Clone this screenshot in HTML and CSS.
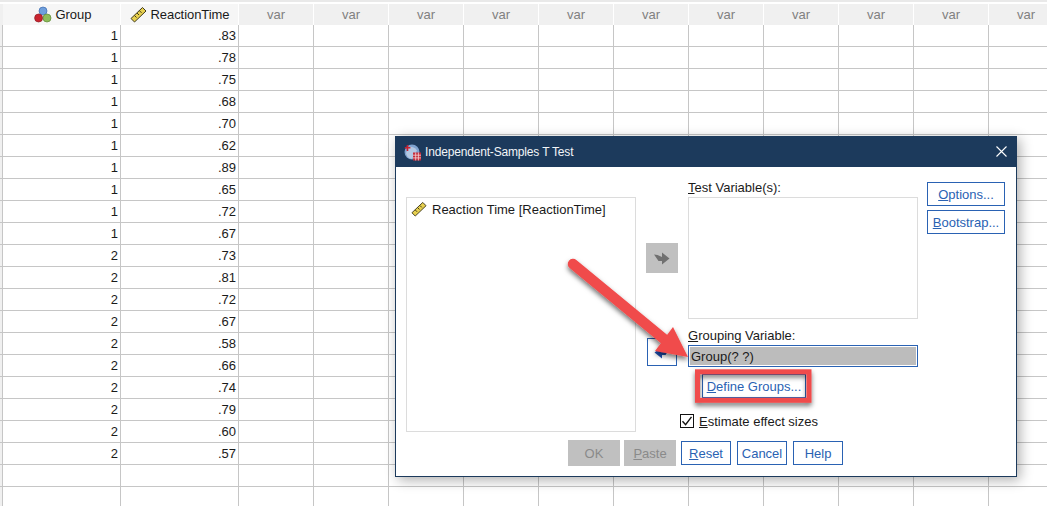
FILE: index.html
```html
<!DOCTYPE html>
<html lang="en">
<head>
<meta charset="utf-8">
<title>Independent-Samples T Test</title>
<link rel="stylesheet" href="styles.css">
</head>
<body>
<div class="sheet">
  <div class="head">
    <div class="gutter"></div>
    <div class="hcell data-col group-head">
      <svg class="ico" width="18" height="18" viewBox="0 0 18 18"><circle cx="9" cy="5" r="4" fill="#6f9fdc" stroke="#3d6bb0" stroke-width=".7"/><circle cx="4.600" cy="12" r="4" fill="#c9242f" stroke="#8e1a22" stroke-width=".7"/><circle cx="13" cy="12" r="4" fill="#8fbc5a" stroke="#5f8a38" stroke-width=".7"/></svg>
      <span>Group</span>
    </div>
    <div class="hcell data-col time-head">
      <svg class="ico" width="17" height="17" viewBox="0 0 17 17"><path d="M1 12.500 12.500 1.500 16 5 4.500 16Z" fill="#e6cf4e" stroke="#3f3a1c" stroke-width="1"/><path d="M4.500 9.500l2 2M7 7l2 2M9.500 4.800l2 2" stroke="#3f3a1c" stroke-width="1" fill="none"/></svg>
      <span>ReactionTime</span>
    </div>
    <div class="hcell var-col">var</div><div class="hcell var-col">var</div><div class="hcell var-col">var</div><div class="hcell var-col">var</div><div class="hcell var-col">var</div><div class="hcell var-col">var</div><div class="hcell var-col">var</div><div class="hcell var-col">var</div><div class="hcell var-col">var</div><div class="hcell var-col">var</div><div class="hcell var-col">var</div>
  </div>
  <div class="row"><div class="gutter"></div><div class="cell data-col">1</div><div class="cell data-col">.83</div><div class="rest"></div></div>
  <div class="row"><div class="gutter"></div><div class="cell data-col">1</div><div class="cell data-col">.78</div><div class="rest"></div></div>
  <div class="row"><div class="gutter"></div><div class="cell data-col">1</div><div class="cell data-col">.75</div><div class="rest"></div></div>
  <div class="row"><div class="gutter"></div><div class="cell data-col">1</div><div class="cell data-col">.68</div><div class="rest"></div></div>
  <div class="row"><div class="gutter"></div><div class="cell data-col">1</div><div class="cell data-col">.70</div><div class="rest"></div></div>
  <div class="row"><div class="gutter"></div><div class="cell data-col">1</div><div class="cell data-col">.62</div><div class="rest"></div></div>
  <div class="row"><div class="gutter"></div><div class="cell data-col">1</div><div class="cell data-col">.89</div><div class="rest"></div></div>
  <div class="row"><div class="gutter"></div><div class="cell data-col">1</div><div class="cell data-col">.65</div><div class="rest"></div></div>
  <div class="row"><div class="gutter"></div><div class="cell data-col">1</div><div class="cell data-col">.72</div><div class="rest"></div></div>
  <div class="row"><div class="gutter"></div><div class="cell data-col">1</div><div class="cell data-col">.67</div><div class="rest"></div></div>
  <div class="row"><div class="gutter"></div><div class="cell data-col">2</div><div class="cell data-col">.73</div><div class="rest"></div></div>
  <div class="row"><div class="gutter"></div><div class="cell data-col">2</div><div class="cell data-col">.81</div><div class="rest"></div></div>
  <div class="row"><div class="gutter"></div><div class="cell data-col">2</div><div class="cell data-col">.72</div><div class="rest"></div></div>
  <div class="row"><div class="gutter"></div><div class="cell data-col">2</div><div class="cell data-col">.67</div><div class="rest"></div></div>
  <div class="row"><div class="gutter"></div><div class="cell data-col">2</div><div class="cell data-col">.58</div><div class="rest"></div></div>
  <div class="row"><div class="gutter"></div><div class="cell data-col">2</div><div class="cell data-col">.66</div><div class="rest"></div></div>
  <div class="row"><div class="gutter"></div><div class="cell data-col">2</div><div class="cell data-col">.74</div><div class="rest"></div></div>
  <div class="row"><div class="gutter"></div><div class="cell data-col">2</div><div class="cell data-col">.79</div><div class="rest"></div></div>
  <div class="row"><div class="gutter"></div><div class="cell data-col">2</div><div class="cell data-col">.60</div><div class="rest"></div></div>
  <div class="row"><div class="gutter"></div><div class="cell data-col">2</div><div class="cell data-col">.57</div><div class="rest"></div></div>
  <div class="row"><div class="gutter"></div><div class="cell data-col"></div><div class="cell data-col"></div><div class="rest"></div></div>
  <div class="row"><div class="gutter"></div><div class="cell data-col"></div><div class="cell data-col"></div><div class="rest"></div></div>
</div>

<section class="dialog">
  <header class="titlebar">
    <svg width="17" height="17" viewBox="0 0 17 17"><circle cx="8" cy="8" r="7.500" fill="#7fa3d0"/><path d="M4 3.500a7 7 0 0 1 9 3L8 15a7 7 0 0 1-6-6Z" fill="#dfe8f3" opacity=".55"/><path d="M3.500 1v6M.8 3.800h5.600" stroke="#c8202f" stroke-width="1.600"/><rect x="9" y="8.500" width="8" height="8" fill="#c32b3a"/><path d="M9 11.200h8M9 13.900h8M11.700 8.500v8M14.400 8.500v8" stroke="#f3d5d8" stroke-width=".8"/></svg>
    <h1 class="title">Independent-Samples T Test</h1>
    <svg class="close" width="11" height="11" viewBox="0 0 11 11"><path d="M.5.5l10 10M10.500.5l-10 10" stroke="#fff" stroke-width="1.100"/></svg>
  </header>
  <div class="dialog-body">
    <div class="source-col">
      <div class="listbox source-list">
        <div class="list-item">
          <svg width="16" height="16" viewBox="0 0 17 17"><path d="M1 12.500 12.500 1.500 16 5 4.500 16Z" fill="#e6cf4e" stroke="#3f3a1c" stroke-width="1"/><path d="M4.500 9.500l2 2M7 7l2 2M9.500 4.800l2 2" stroke="#3f3a1c" stroke-width="1" fill="none"/></svg>
          <span>Reaction Time [ReactionTime]</span>
        </div>
      </div>
    </div>
    <div class="move-col">
      <div class="move-btn disabled">
        <svg width="16" height="13" viewBox="0 0 16 13"><path d="M0 2.500 3.500 3 8 5V0.500L15.500 6.500 8 12.500V9H4.500Z" fill="#707070"/></svg>
      </div>
      <div class="move-btn back">
        <svg width="16" height="13" viewBox="0 0 16 13"><path d="M16 2.500 12.500 3 8 5V0.500L.5 6.500 8 12.500V9H11.500Z" fill="#1d4fb0"/></svg>
      </div>
    </div>
    <div class="target-col">
      <label class="field-label"><u>T</u>est Variable(s):</label>
      <div class="listbox target-list"></div>
      <label class="field-label group-label"><u>G</u>rouping Variable:</label>
      <div class="group-input"><span>Group(? ?)</span></div>
      <button class="btn define"><u>D</u>efine Groups...</button>
      <div class="check-row">
        <span class="checkbox"><svg width="12" height="12" viewBox="0 0 12 12"><path d="M1.500 6.200 4.600 9.600 10.500 1.800" fill="none" stroke="#111" stroke-width="1.400"/></svg></span>
        <span><u>E</u>stimate effect sizes</span>
      </div>
    </div>
    <div class="side-col">
      <button class="btn side"><u>O</u>ptions...</button>
      <button class="btn side"><u>B</u>ootstrap...</button>
    </div>
  </div>
  <footer class="actions">
    <button class="btn action off">OK</button>
    <button class="btn action off paste"><u>P</u>aste</button>
    <button class="btn action reset"><u>R</u>eset</button>
    <button class="btn action">Cancel</button>
    <button class="btn action">Help</button>
  </footer>
</section>

<svg class="annotation" width="1047" height="506" viewBox="0 0 1047 506">
  <defs>
    <filter id="drop" x="-20%" y="-20%" width="150%" height="150%"><feDropShadow dx="0" dy="3" stdDeviation="2.400" flood-color="#000" flood-opacity=".55"/></filter>
  </defs>
  <g filter="url(#drop)">
    <path d="M573 264 664 339" stroke="#f04b4b" stroke-width="10.500" stroke-linecap="round" fill="none"/>
    <path d="M673 327 688 357 655 351Z" fill="#f04b4b"/>
    <rect x="697.500" y="371.800" width="111.500" height="28.500" fill="none" stroke="#f04b4b" stroke-width="5"/>
  </g>
</svg>
</body>
</html>
```
FILE: styles.css
```css
* { box-sizing: border-box; }
html, body { margin: 0; height: 100%; overflow: hidden; background: #fff; }
body { font-family: "Liberation Sans", Arial, sans-serif; font-size: 13px; color: #1a1a1a; position: relative; }

.sheet { width: 100%; height: 506px; overflow: hidden; }
.head { display: flex; height: 25px; padding-top: 4px; background: linear-gradient(#e9e9e9 0 2px, #fff 2px 4px); }
.row { display: flex; height: 22px; border-bottom: 1px solid #c6c6c6; }
.row:last-child { border-bottom: 0; }
.gutter { flex: 0 0 3px; background: #f0f0f0; border-right: 1px solid #c6c6c6; }
.head .gutter { border-right: 0; }

.data-col { flex: 0 0 118px; }
.var-col { flex: 0 0 75px; color: #808080; }
.hcell { display: flex; align-items: center; justify-content: center; gap: 3px; background: #f6f6f6; border-right: 1px solid #fff; }
.group-head { padding-left: 3px; }
.time-head { padding-left: 1px; letter-spacing: -.05px; }
.var-col.hcell { background: #f0f0f0; }
.ico { flex: none; }
.cell { display: flex; align-items: center; justify-content: flex-end; padding-right: 2px; border-right: 1px solid #c6c6c6; }
.rest { flex: 1; background: repeating-linear-gradient(to right, transparent 0 74px, #c6c6c6 74px 75px); }

.dialog { position: absolute; left: 395px; top: 136px; width: 622px; height: 341px; background: #fff; border: 1px solid #1c3a5c; box-shadow: 3px 3px 12px rgba(0,0,0,.32); }
.titlebar { display: flex; align-items: center; gap: 4px; height: 30px; padding-left: 8px; background: #1c3a5c; position: relative; }
.title { margin: 0; font-size: 12px; letter-spacing: -.17px; font-weight: normal; color: #f2f5f8; }
.close { position: absolute; right: 9px; top: 9px; }

.dialog-body { display: grid; grid-template-columns: 230px 52px 230px 78px; padding: 14px 0 0 10px; height: 265px; }
.listbox { border: 1px solid #dcdcdc; background: #fff; }
.source-list { margin-top: 16px; height: 235px; padding: 1px 4px; }
.list-item { display: flex; align-items: center; gap: 5px; height: 20px; }

.move-col { display: flex; flex-direction: column; align-items: center; padding-top: 62px; }
.move-btn { display: flex; align-items: center; justify-content: center; }
.move-btn.disabled { width: 32px; height: 30px; background: #c0c0c0; }
.move-btn.back { width: 30px; height: 28px; margin-top: 65px; margin-left: -1px; background: #fff; border: 1px solid #2a62b3; }

.field-label { display: block; height: 16px; line-height: 13px; }
.target-list { height: 122px; }
.group-label { margin-top: 10px; }
.group-input { height: 22px; border: 1px solid #2a62b3; padding: 1px; }
.group-input span { display: block; height: 100%; padding-left: 1px; line-height: 20px; background: #bcbcbc; }

.btn { display: block; padding: 0; background: #fff; border: 1px solid #2a62b3; color: #2a62b3; font: inherit; text-align: center; }
.define { width: 104px; height: 24px; margin: 7px 0 0 14px; }
.check-row { display: flex; align-items: center; gap: 5px; margin: 16px 0 0 -8px; height: 14px; }
.checkbox { display: flex; align-items: center; justify-content: center; width: 14px; height: 14px; border: 1px solid #111; }

.side-col { display: flex; flex-direction: column; gap: 4px; margin-left: 9px; padding-top: 1px; width: 78px; }
.side { width: 78px; height: 24px; }

.actions { display: flex; align-items: center; gap: 6px; padding-left: 172px; height: 26px; margin-top: 8px; }
.action { flex: none; width: 50px; height: 24px; }
.action.off { width: 52px; height: 26px; margin-right: -2px; background: #c0c0c0; border: 0; color: #8a8a8a; }
.action.paste { margin-right: -1px; }

.annotation { position: absolute; left: 0; top: 0; pointer-events: none; }
```
